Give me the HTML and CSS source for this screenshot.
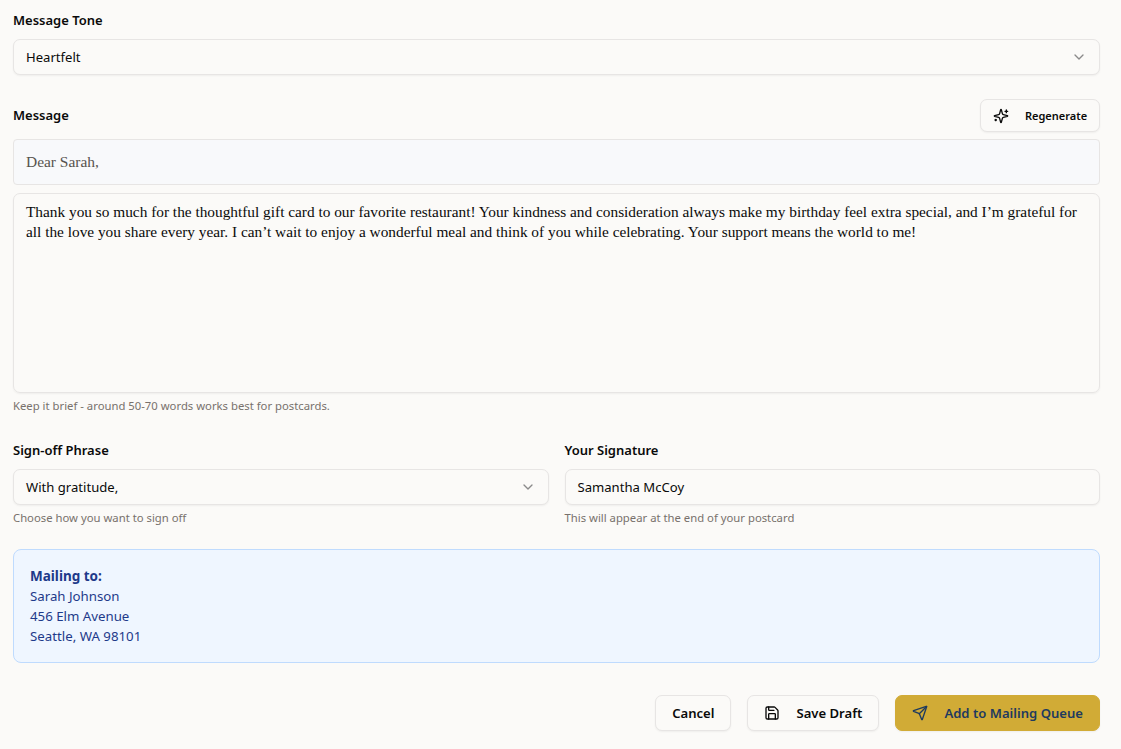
FILE: index.html
```html
<!DOCTYPE html>
<html lang="en">
<head>
<meta charset="utf-8">
<title>Postcard message</title>
<link rel="stylesheet" href="styles.css">
</head>
<body>
<form class="form">
  <section class="tone">
    <label class="label">Message Tone</label>
    <div class="select">
      <span>Heartfelt</span>
      <svg class="chev" viewBox="0 0 24 24"><path d="m6 9 6 6 6-6"/></svg>
    </div>
  </section>

  <section class="message">
    <div class="msg-head">
      <label class="label">Message</label>
      <button type="button" class="btn regen">
        <svg class="ico" viewBox="0 0 24 24"><path d="M9.937 15.5A2 2 0 0 0 8.5 14.063l-6.135-1.582a.5.5 0 0 1 0-.962L8.5 9.936A2 2 0 0 0 9.937 8.5l1.582-6.135a.5.5 0 0 1 .963 0L14.063 8.5A2 2 0 0 0 15.5 9.937l6.135 1.581a.5.5 0 0 1 0 .964L15.5 14.063a2 2 0 0 0-1.437 1.437l-1.582 6.135a.5.5 0 0 1-.963 0z"/><path d="M20 3v4"/><path d="M22 5h-4"/><path d="M4 17v2"/><path d="M5 18H3"/></svg>
        <span>Regenerate</span>
      </button>
    </div>
    <div class="greeting">Dear Sarah,</div>
    <div class="body-text">Thank you so much for the thoughtful gift card to our favorite restaurant! Your kindness and consideration always make my birthday feel extra special, and I’m grateful for all the love you share every year. I can’t wait to enjoy a wonderful meal and think of you while celebrating. Your support means the world to me!</div>
    <p class="hint">Keep it brief - around 50-70 words works best for postcards.</p>
  </section>

  <section class="signoff">
    <div class="col">
      <label class="label">Sign-off Phrase</label>
      <div class="select">
        <span>With gratitude,</span>
        <svg class="chev" viewBox="0 0 24 24"><path d="m6 9 6 6 6-6"/></svg>
      </div>
      <p class="hint">Choose how you want to sign off</p>
    </div>
    <div class="col">
      <label class="label">Your Signature</label>
      <div class="select"><span>Samantha McCoy</span></div>
      <p class="hint">This will appear at the end of your postcard</p>
    </div>
  </section>

  <section class="mailing">
    <strong>Mailing to:</strong>
    <div>Sarah Johnson</div>
    <div>456 Elm Avenue</div>
    <div>Seattle, WA 98101</div>
  </section>

  <div class="actions">
    <button type="button" class="btn action">Cancel</button>
    <button type="button" class="btn action">
      <svg class="ico" viewBox="0 0 24 24"><path d="M15.2 3a2 2 0 0 1 1.4.6l3.8 3.8a2 2 0 0 1 .6 1.4V19a2 2 0 0 1-2 2H5a2 2 0 0 1-2-2V5a2 2 0 0 1 2-2z"/><path d="M17 21v-7a1 1 0 0 0-1-1H8a1 1 0 0 0-1 1v7"/><path d="M7 3v4a1 1 0 0 0 1 1h7"/></svg>
      <span>Save Draft</span>
    </button>
    <button type="button" class="btn action primary">
      <svg class="ico" viewBox="0 0 24 24"><path d="M14.536 21.686a.5.5 0 0 0 .937-.024l6.5-19a.496.496 0 0 0-.635-.635l-19 6.5a.5.5 0 0 0-.024.937l7.93 3.18a2 2 0 0 1 1.112 1.11z"/><path d="m21.854 2.147-10.94 10.939"/></svg>
      <span>Add to Mailing Queue</span>
    </button>
  </div>
</form>
</body>
</html>
```
FILE: styles.css
```css
* { box-sizing: border-box; }
html, body { margin: 0; height: 100%; }
body {
  background: #fbfaf8;
  color: #0a0a0a;
  font-family: "Noto Sans", "Open Sans", sans-serif;
  font-size: 14px;
  overflow: hidden;
}
.form { padding: 11px 21px 0 13px; display: flex; flex-direction: column; }
.label { display: block; font-size: 13px; font-weight: 600; line-height: 18px; color: #0a0a0a; }
.tone .label { margin-bottom: 10px; }
.select {
  height: 36px;
  display: flex;
  align-items: center;
  justify-content: space-between;
  padding: 0 12px;
  background: #fbfaf8;
  border: 1px solid #e7e5e4;
  border-radius: 7px;
  box-shadow: 0 1px 2px rgba(0,0,0,.05);
  font-size: 13.1px;
}
.chev { width: 16px; height: 16px; fill: none; stroke: #8a8a8a; stroke-width: 2; stroke-linecap: round; stroke-linejoin: round; }
.message { margin-top: 24px; }
.msg-head { display: flex; align-items: center; justify-content: space-between; height: 33px; margin-bottom: 7px; }
.msg-head .label { margin-top: -1px; }
.btn {
  display: inline-flex;
  align-items: center;
  justify-content: center;
  background: #fbfaf8;
  border: 1px solid #e7e5e4;
  border-radius: 7px;
  box-shadow: 0 1px 2px rgba(0,0,0,.05);
  font-family: inherit;
  font-weight: 600;
  color: #0a0a0a;
  cursor: pointer;
}
.ico { width: 16px; height: 16px; fill: none; stroke: currentColor; stroke-width: 2; stroke-linecap: round; stroke-linejoin: round; flex: none; }
.regen { height: 33px; width: 120px; gap: 16px; font-size: 11px; padding: 0 12px; }
.greeting {
  height: 46px;
  display: flex;
  align-items: center;
  padding: 0 12px;
  background: #f8f9fb;
  border: 1px solid #e7e5e4;
  border-radius: 4px;
  font-family: "Liberation Serif", serif;
  font-size: 15.45px;
  color: #57534e;
}
.body-text {
  height: 200px;
  margin-top: 8px;
  padding: 8px 12px;
  border: 1px solid #e7e5e4;
  border-radius: 7px;
  box-shadow: 0 1px 2px rgba(0,0,0,.05);
  font-family: "Liberation Serif", serif;
  font-size: 15.33px;
  line-height: 20px;
  color: #0a0a0a;
}
.hint { margin: 5px 0 0; font-size: 11.3px; line-height: 16px; color: #78716c; }
.signoff { margin-top: 27px; display: grid; grid-template-columns: 1fr 1fr; gap: 16px; }
.signoff .label { margin-bottom: 10px; }
.mailing {
  margin-top: 23px;
  height: 114px;
  padding: 16px;
  background: #eff6ff;
  border: 1px solid #bfdbfe;
  border-radius: 8px;
  color: #1e3a8a;
  font-size: 13.25px;
  line-height: 20px;
}
.mailing strong { display: block; font-weight: 700; font-size: 13.5px; }
.actions { margin-top: 32px; display: flex; justify-content: flex-end; gap: 16px; }
.action { height: 36px; padding: 0 16px; gap: 16px; font-size: 13.1px; }
.primary { background: #d1ab36; border-color: #d1ab36; color: #1e3a5f; }
```
